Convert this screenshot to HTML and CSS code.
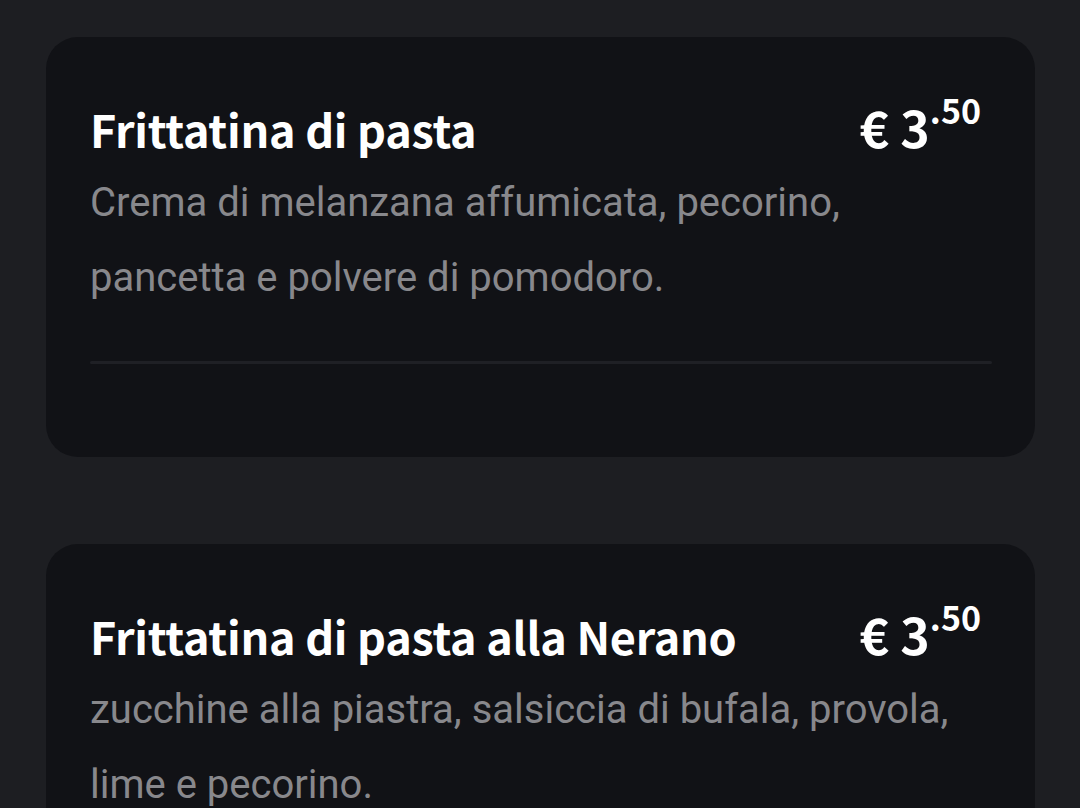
FILE: index.html
```html
<!DOCTYPE html>
<html lang="it">
<head>
  <meta charset="UTF-8">
  <title>Menu</title>
  <link rel="stylesheet" href="styles.css">
</head>
<body>
  <div class="list">
    <div class="card">
      <div class="head">
        <h3 class="title">Frittatina di pasta</h3>
        <div class="price">€ 3<sup>.50</sup></div>
      </div>
      <p class="desc">Crema di melanzana affumicata, pecorino, pancetta e polvere di pomodoro.</p>
      <div class="sep"></div>
    </div>

    <div class="card">
      <div class="head">
        <h3 class="title">Frittatina di pasta alla Nerano</h3>
        <div class="price">€ 3<sup>.50</sup></div>
      </div>
      <p class="desc">zucchine alla piastra, salsiccia di bufala, provola, lime e pecorino.</p>
      <div class="sep"></div>
    </div>
  </div>
</body>
</html>
```

FILE: styles.css
```css
body { margin: 0; background: #1d1e22; font-family: Roboto, "Liberation Sans", sans-serif; }
.list { padding: 37px 45px 40px 46px; display: flex; flex-direction: column; gap: 87px; }
.card { background: #111216; border-radius: 32px; padding: 59px 43px 93px 44px; }
.head { display: flex; justify-content: space-between; align-items: baseline; }
.title { margin: 0; color: #fff; font-family: "Noto Sans CJK JP", "Source Sans Pro", sans-serif; font-weight: 700; font-size: 45px; line-height: 60px; letter-spacing: -0.3px; }
.price { color: #fff; font-family: "Noto Sans CJK JP", sans-serif; font-weight: 700; font-size: 50px; line-height: 60px; white-space: nowrap; margin-right: 11px; }
.price sup { font-size: 34px; vertical-align: 24px; line-height: 0; }
.desc { margin: 6px 0 0; color: #88888c; font-size: 40px; line-height: 75px; max-width: 880px; }
.sep { height: 3px; background: #1f2025; border-radius: 2px; margin-top: 46px; }
```
